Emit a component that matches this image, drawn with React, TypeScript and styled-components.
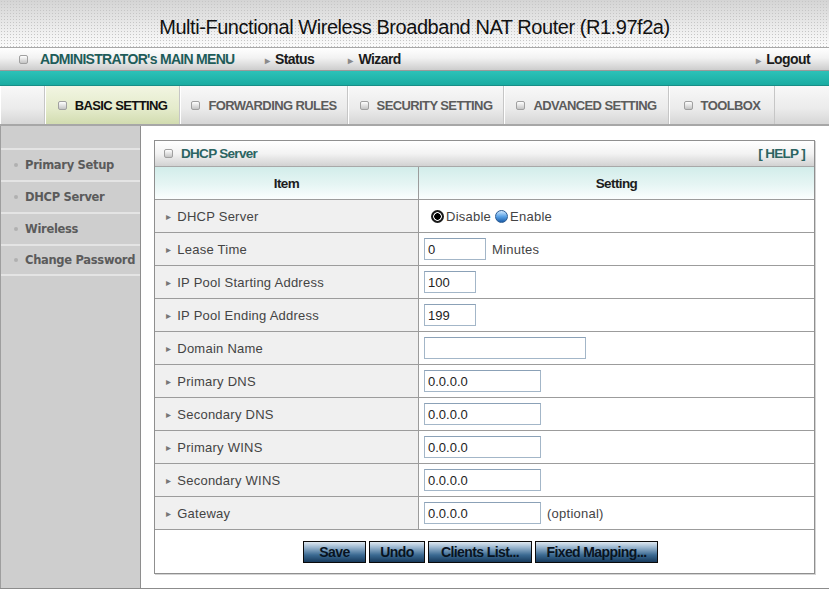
import styled, { createGlobalStyle } from "styled-components";

const GlobalStyle = createGlobalStyle`
    html, body {
        margin: 0;
        padding: 0;
        background: #ffffff;
    }
    body {
        font-family: "Liberation Sans", Arial, sans-serif;
        width: 829px;
        height: 590px;
        overflow: hidden;
    }
`;

// no narrow face installed, so the "Arial Narrow" look is faked with tight tracking
const NARROW = `"Liberation Sans Narrow", "Arial Narrow", "Liberation Sans", Arial, sans-serif`;

const Page = styled.div`
    display: flex;
    flex-direction: column;
    width: 829px;
    height: 590px;
`;

const TitleBar = styled.div`
    height: 48px;
    display: flex;
    align-items: flex-end;
    justify-content: center;
    padding-bottom: 8px;
    box-sizing: border-box;
    border-bottom: 1px solid #a8a8a8;
    background-color: #e6e6e6;
    background-image: radial-gradient(#c6c6c6 0.7px, transparent 0.9px),
        linear-gradient(#d4d4d4, #f0f0f0 70%, #fcfcfc);
    background-size: 3px 3px, 100% 100%;
`;

const Title = styled.h1`
    margin: 0;
    font-family: ${NARROW};
    font-weight: normal;
    font-size: 20px;
    letter-spacing: -0.45px;
    color: #111;
`;

const MenuBar = styled.div`
    height: 22px;
    display: flex;
    align-items: center;
    padding: 0 19px 0 19px;
    background: linear-gradient(#ffffff, #f2f2f2 45%, #cdcdcd);
    border-bottom: 1px solid #9a9a9a;
`;

const SquareIcon = styled.span`
    display: inline-block;
    width: 7px;
    height: 7px;
    border: 1px solid #a0a0a0;
    border-radius: 2px;
    background: linear-gradient(#ffffff, #c4c4c4);
    margin-right: 8px;
    flex: none;
`;

const MenuTitle = styled.span`
    font-family: ${NARROW};
    font-weight: bold;
    font-size: 14px;
    letter-spacing: -0.7px;
    color: #1e5c59;
    margin-left: 4px;
    margin-right: 30px;
`;

const MenuLink = styled.span<{ $right?: boolean }>`
    font-family: ${NARROW};
    font-weight: bold;
    font-size: 14px;
    letter-spacing: -0.6px;
    color: #1a1a1a;
    margin-right: 34px;
    ${(p) => (p.$right ? "margin-left: auto; margin-right: 0;" : "")}
    &::before {
        content: "▸";
        color: #8a8a8a;
        font-size: 10px;
        margin-right: 6px;
    }
`;

const TealBar = styled.div`
    height: 14px;
    background: linear-gradient(#2cc2b8, #1aaca2);
    border-bottom: 1px solid #188e87;
`;

const TabBar = styled.div`
    height: 40px;
    display: flex;
    background: linear-gradient(#f8f8f8, #ebebeb 60%, #d6d6d6);
    border-bottom: 2px solid #a7a7a7;
    box-sizing: border-box;
`;

const Tab = styled.div<{ $w: number; $active?: boolean }>`
    width: ${(p) => p.$w}px;
    flex: none;
    display: flex;
    align-items: center;
    justify-content: center;
    box-sizing: border-box;
    border-right: 1px solid #c6c6c6;
    border-left: 1px solid #ffffff;
    font-family: ${NARROW};
    font-weight: bold;
    font-size: 13px;
    letter-spacing: -0.6px;
    color: ${(p) => (p.$active ? "#111" : "#5c5c5c")};
    background: ${(p) =>
        p.$active ? "linear-gradient(#f2f5e2, #e4ebcb 60%, #d2dcb0)" : "transparent"};
`;

const Body = styled.div`
    flex: 1;
    display: flex;
    min-height: 0;
    border-bottom: 1px solid #8c8c8c;
    margin-bottom: 1px;
`;

const Sidebar = styled.div`
    width: 141px;
    flex: none;
    background: #cecece;
    border-right: 1px solid #8e8e8e;
    border-left: 1px solid #9e9e9e;
    box-sizing: border-box;
    padding-top: 22px;
`;

const SideItem = styled.div`
    height: 32px;
    display: flex;
    align-items: center;
    box-sizing: border-box;
    border-top: 2px solid #e4e4e4;
    padding-left: 13px;
    font-family: "DejaVu Sans", Verdana, sans-serif;
    font-weight: bold;
    font-size: 11.5px;
    color: #5b5b5b;
    letter-spacing: -0.3px;
    &::before {
        content: "";
        width: 4px;
        height: 4px;
        border-radius: 50%;
        background: #b0b0b0;
        margin-right: 7px;
    }
    &:last-child {
        border-bottom: 2px solid #e4e4e4;
    }
`;

const Main = styled.div`
    flex: 1;
    padding: 14px 14px 0 13px;
    box-sizing: border-box;
`;

const Panel = styled.div`
    border: 1px solid #8f8f8f;
    box-shadow: 1px 1px 0 #d4d4d4;
`;

const PanelHead = styled.div`
    height: 26px;
    display: flex;
    align-items: center;
    box-sizing: border-box;
    padding: 0 9px 0 9px;
    background: linear-gradient(#ffffff, #f3f3f3 50%, #d2d2d2);
    border-bottom: 1px solid #a8a8a8;
    font-family: ${NARROW};
    font-weight: bold;
    font-size: 13.5px;
    letter-spacing: -0.7px;
    color: #2b6462;
`;

const Help = styled.span`
    margin-left: auto;
`;

const Table = styled.div`
    display: grid;
    grid-template-columns: 264px 1fr;
`;

const HeadCell = styled.div<{ $last?: boolean }>`
    height: 33px;
    box-sizing: border-box;
    display: flex;
    align-items: center;
    justify-content: center;
    background: linear-gradient(#d2edea, #e6f5f4 55%, #fbfefe);
    border-right: ${(p) => (p.$last ? "none" : "1px solid #9c9c9c")};
    border-bottom: 1px solid #9c9c9c;
    font-family: ${NARROW};
    font-weight: bold;
    font-size: 13.5px;
    letter-spacing: -0.6px;
    color: #1d1d1d;
`;

const LabelCell = styled.div`
    height: 33px;
    box-sizing: border-box;
    display: flex;
    align-items: center;
    padding-left: 11px;
    background: #f0f0f0;
    border-right: 1px solid #9c9c9c;
    border-bottom: 1px solid #9c9c9c;
    font-size: 13px;
    letter-spacing: 0.25px;
    color: #444;
    &::before {
        content: "▸";
        color: #777;
        font-size: 10px;
        margin-right: 6px;
    }
`;

const ValueCell = styled.div`
    height: 33px;
    box-sizing: border-box;
    display: flex;
    align-items: center;
    padding-left: 5px;
    background: #ffffff;
    border-bottom: 1px solid #9c9c9c;
    font-size: 13px;
    letter-spacing: 0.25px;
    color: #444;
`;

const TextBox = styled.input<{ $w: number }>`
    width: ${(p) => p.$w}px;
    height: 22px;
    box-sizing: border-box;
    border: 1px solid #a3b6c8;
    border-top-color: #8ba1b7;
    padding: 0 3px;
    font-family: "Liberation Sans", Arial, sans-serif;
    font-size: 13px;
    color: #222;
    margin-right: 6px;
    outline: none;
`;

const Radio = styled.span<{ $on?: boolean }>`
    display: inline-block;
    width: 13px;
    height: 13px;
    border-radius: 50%;
    box-sizing: border-box;
    margin-right: 2px;
    ${(p) =>
        p.$on
            ? `background: radial-gradient(circle at 50% 50%, #000 0 3px, #f4f4f4 3.5px 4px, #1a1a1a 4.6px);
               margin-left: 7px;`
            : `background: linear-gradient(#cde7ff, #5aa2e6 50%, #1c5eaa); border: 1px solid #2b5b92;`}
`;

const RadioLabel = styled.span`
    margin-right: 4px;
`;

const ButtonRow = styled.div`
    grid-column: 1 / 3;
    height: 43px;
    display: flex;
    align-items: center;
    justify-content: center;
    gap: 3px;
    padding-right: 8px;
`;

const Button = styled.button<{ $w: number }>`
    width: ${(p) => p.$w}px;
    height: 22px;
    padding: 0;
    border: 1px solid #0a0a0a;
    border-radius: 0;
    background: linear-gradient(#dfe8f0, #9fbad2 25%, #3b6a92 65%, #173a5c);
    font-family: ${NARROW};
    font-weight: bold;
    font-size: 14px;
    letter-spacing: -0.6px;
    color: #08131f;
    cursor: pointer;
`;

const rows: { label: string; value: React.ReactNode }[] = [
    {
        label: "DHCP Server",
        value: (
            <>
                <Radio $on />
                <RadioLabel>Disable</RadioLabel>
                <Radio />
                <RadioLabel>Enable</RadioLabel>
            </>
        ),
    },
    {
        label: "Lease Time",
        value: (
            <>
                <TextBox $w={62} defaultValue="0" />
                Minutes
            </>
        ),
    },
    { label: "IP Pool Starting Address", value: <TextBox $w={52} defaultValue="100" /> },
    { label: "IP Pool Ending Address", value: <TextBox $w={52} defaultValue="199" /> },
    { label: "Domain Name", value: <TextBox $w={162} defaultValue="" /> },
    { label: "Primary DNS", value: <TextBox $w={117} defaultValue="0.0.0.0" /> },
    { label: "Secondary DNS", value: <TextBox $w={117} defaultValue="0.0.0.0" /> },
    { label: "Primary WINS", value: <TextBox $w={117} defaultValue="0.0.0.0" /> },
    { label: "Secondary WINS", value: <TextBox $w={117} defaultValue="0.0.0.0" /> },
    {
        label: "Gateway",
        value: (
            <>
                <TextBox $w={117} defaultValue="0.0.0.0" />
                (optional)
            </>
        ),
    },
];

const tabs = [
    { name: "", w: 45 },
    { name: "BASIC SETTING", w: 135, active: true },
    { name: "FORWARDING RULES", w: 168 },
    { name: "SECURITY SETTING", w: 156 },
    { name: "ADVANCED SETTING", w: 165 },
    { name: "TOOLBOX", w: 106 },
];

const buttons = [
    { label: "Save", w: 63 },
    { label: "Undo", w: 56 },
    { label: "Clients List...", w: 104 },
    { label: "Fixed Mapping...", w: 123 },
];

const sideItems = ["Primary Setup", "DHCP Server", "Wireless", "Change Password"];

const App: React.FC = () => {
    return (
        <>
            <GlobalStyle />
            <Page>
                <TitleBar>
                    <Title>Multi-Functional Wireless Broadband NAT Router (R1.97f2a)</Title>
                </TitleBar>
                <MenuBar>
                    <SquareIcon />
                    <MenuTitle>ADMINISTRATOR's MAIN MENU</MenuTitle>
                    <MenuLink>Status</MenuLink>
                    <MenuLink>Wizard</MenuLink>
                    <MenuLink $right>Logout</MenuLink>
                </MenuBar>
                <TealBar />
                <TabBar>
                    {tabs.map((t) => (
                        <Tab key={t.w + t.name} $w={t.w} $active={t.active}>
                            {t.name && <SquareIcon />}
                            {t.name}
                        </Tab>
                    ))}
                </TabBar>
                <Body>
                    <Sidebar>
                        {sideItems.map((s) => (
                            <SideItem key={s}>{s}</SideItem>
                        ))}
                    </Sidebar>
                    <Main>
                        <Panel>
                            <PanelHead>
                                <SquareIcon />
                                DHCP Server
                                <Help>[ HELP ]</Help>
                            </PanelHead>
                            <Table>
                                <HeadCell>Item</HeadCell>
                                <HeadCell $last>Setting</HeadCell>
                                {rows.map((r) => [
                                    <LabelCell key={r.label + "-l"}>{r.label}</LabelCell>,
                                    <ValueCell key={r.label + "-v"}>{r.value}</ValueCell>,
                                ])}
                                <ButtonRow>
                                    {buttons.map((b) => (
                                        <Button key={b.label} $w={b.w}>
                                            {b.label}
                                        </Button>
                                    ))}
                                </ButtonRow>
                            </Table>
                        </Panel>
                    </Main>
                </Body>
            </Page>
        </>
    );
};

export default App;
